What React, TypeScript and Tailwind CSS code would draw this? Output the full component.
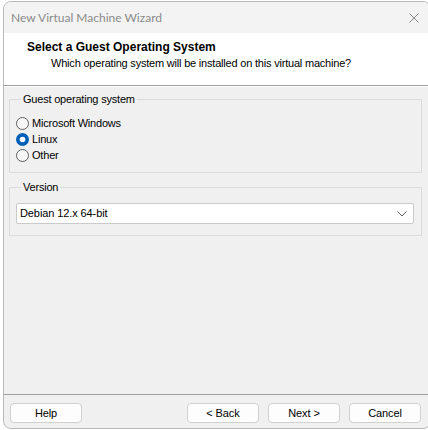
import React from "react";

const body = { fontFamily: '"Liberation Sans", Arial, sans-serif' };
const title = { fontFamily: 'Lato, "Noto Sans", Arial, sans-serif' };

function Radio({ checked, label }: { checked?: boolean; label: string }) {
  return (
    <div className="flex items-center h-[16px]">
      {checked ? (
        <svg width="13" height="13" viewBox="0 0 13 13" className="shrink-0">
          <circle cx="6.5" cy="6.5" r="6.5" fill="#005fb8" />
          <circle cx="6.5" cy="6.5" r="2.8" fill="#ffffff" />
        </svg>
      ) : (
        <svg width="13" height="13" viewBox="0 0 13 13" className="shrink-0">
          <circle cx="6.5" cy="6.5" r="6" fill="#f7f7f7" stroke="#5f5f5f" strokeWidth="1" />
        </svg>
      )}
      <span className="ml-[3px] text-[11px] tracking-[-0.2px] text-black leading-none">{label}</span>
    </div>
  );
}

function Btn({ label }: { label: string }) {
  return (
    <button className="w-[72px] h-[20px] rounded-[4px] border border-[#d0d0d0] bg-[#fdfdfd] text-[11px] tracking-[-0.1px] text-black leading-none flex items-center justify-center">
      {label}
    </button>
  );
}

export default function App() {
  return (
    <div className="w-[428px] h-[430px] bg-white overflow-hidden pl-[3px] pt-[1px]" style={body}>
      <div className="w-[428px] h-[428px] rounded-[8px] border border-[#b9b9b9] bg-[#f0f0f0] overflow-hidden flex flex-col">
        {/* Title bar */}
        <div className="h-[31px] shrink-0 bg-[#f3f3f3] flex items-center justify-between pl-[7px] pr-[11px]">
          <span className="text-[12px] text-[#8a8a8a]" style={title}>New Virtual Machine Wizard</span>
          <svg width="10" height="10" viewBox="0 0 10 10">
            <path d="M0.5 0.5 L9.5 9.5 M9.5 0.5 L0.5 9.5" stroke="#8a8a8a" strokeWidth="1" />
          </svg>
        </div>
        {/* Header */}
        <div className="h-[52px] shrink-0 bg-white pl-[23px] pt-[6px]">
          <div className="text-[12px] font-bold text-black leading-[16px]">Select a Guest Operating System</div>
          <div className="text-[11px] tracking-[-0.2px] text-black leading-[16px] pl-[24px]">
            Which operating system will be installed on this virtual machine?
          </div>
        </div>
        <div className="h-px bg-[#a0a0a0] shrink-0" />
        <div className="h-px bg-white shrink-0" />
        {/* Body */}
        <div className="flex-1 flex flex-col px-[5px] pt-[6px]">
          <fieldset className="border border-[#dcdcdc] h-[80px] w-[413px] pl-[6px] pt-[9px] m-0">
            <legend className="text-[11px] tracking-[-0.2px] text-black px-[2px] ml-[5px] leading-[13px]">Guest operating system</legend>
            <div className="flex flex-col gap-[0px]">
              <Radio label="Microsoft Windows" />
              <Radio checked label="Linux" />
              <Radio label="Other" />
            </div>
          </fieldset>
          <fieldset className="border border-[#dcdcdc] h-[55px] w-[413px] mt-[8px] pl-[6px] pt-[9px] m-0">
            <legend className="text-[11px] tracking-[-0.2px] text-black px-[2px] ml-[5px] leading-[13px]">Version</legend>
            <div className="w-[398px] h-[21px] bg-white border border-[#cacaca] rounded-[2px] flex items-center justify-between pl-[3px] pr-[6px]">
              <span className="text-[11px] tracking-[-0.1px] text-black">Debian 12.x 64-bit</span>
              <svg width="10" height="6" viewBox="0 0 10 6">
                <path d="M0.5 0.5 L5 5 L9.5 0.5" fill="none" stroke="#606060" strokeWidth="1" />
              </svg>
            </div>
          </fieldset>
          <div className="flex-1" />
        </div>
        <div className="h-px bg-[#a0a0a0] shrink-0 mx-0" />
        <div className="h-[33px] shrink-0 flex items-start pt-[8px] pl-[6px]">
          <Btn label="Help" />
          <div className="ml-[105px] flex gap-[9px]">
            <Btn label="< Back" />
            <Btn label="Next >" />
            <Btn label="Cancel" />
          </div>
        </div>
      </div>
    </div>
  );
}
